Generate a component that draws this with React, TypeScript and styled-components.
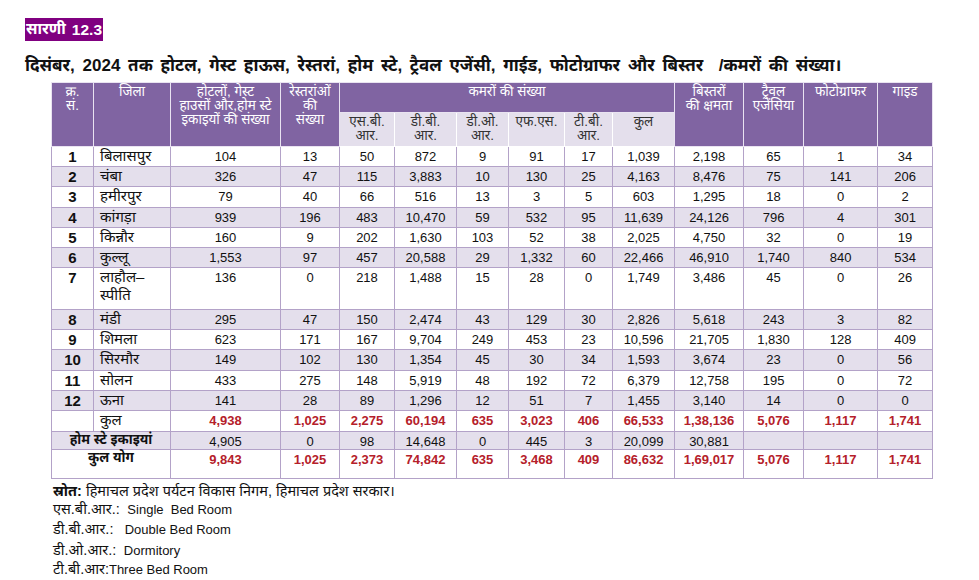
import React from "react";
import styled, { createGlobalStyle, css } from "styled-components";

const Global = createGlobalStyle`
  html, body { margin: 0; padding: 0; background: #ffffff; }
  body { font-family: "Liberation Sans", Arial, "Noto Sans Devanagari", "Lohit Devanagari", sans-serif; color: #111; }
`;

const FONT = `"Liberation Sans", Arial, "Noto Sans Devanagari", "Lohit Devanagari", sans-serif`;
const PURPLE = "#8064a2";
const LAV = "#e4dfec";
const LINE = "#b3a2c8";
const RED = "#b5202a";

const Page = styled.div`
  width: 979px;
  height: 580px;
  box-sizing: border-box;
  padding: 18px 0 0 25px;
  overflow: hidden;
`;

const TitleTag = styled.div`
  display: inline-flex;
  align-items: center;
  height: 23px;
  padding: 0 1px 0 1px;
  background: #800080;
  color: #fff;
  font-size: 15.5px;
  font-weight: bold;
  gap: 6px;
`;

const Heading = styled.h1`
  margin: 14px 0 0 0;
  font-size: 17px;
  font-weight: bold;
  line-height: 22px;
  word-spacing: 3px;
  color: #111;
  white-space: pre;
`;

const Table = styled.table`
  margin: 5px 0 0 26px;
  width: 881px;
  table-layout: fixed;
  border-collapse: collapse;
  font-family: ${FONT};
`;

const HeadCell = styled.th<{ $sub?: boolean; $h?: number }>`
  background: ${(p) => (p.$sub ? LAV : PURPLE)};
  color: ${(p) => (p.$sub ? "#333" : "#fff")};
  border: 1px solid ${(p) => (p.$sub ? "#ffffff" : "#e9e3f1")};
  font-weight: normal;
  font-size: 13.5px;
  line-height: 14px;
  vertical-align: top;
  text-align: center;
  padding: 2px 1px 0 1px;
  height: ${(p) => p.$h ?? 20}px;
  box-sizing: border-box;
`;

const Row = styled.tr<{ $shade?: boolean; $h?: number }>`
  background: ${(p) => (p.$shade ? LAV : "#fff")};
  height: ${(p) => p.$h ?? 20}px;
`;

const cellBase = css`
  border: 1px solid ${LINE};
  vertical-align: top;
  padding: 1px 2px 0 2px;
  box-sizing: border-box;
`;

const NumCell = styled.td<{ $red?: boolean }>`
  ${cellBase};
  text-align: center;
  font-size: 13px;
  line-height: 15px;
  padding-top: 2px;
  color: ${(p) => (p.$red ? RED : "#111")};
  font-weight: ${(p) => (p.$red ? "bold" : "normal")};
`;

const SerialCell = styled.td`
  ${cellBase};
  text-align: center;
  font-size: 15px;
  font-weight: bold;
  line-height: 17px;
`;

const DistrictCell = styled.td`
  ${cellBase};
  text-align: left;
  padding-left: 6px;
  font-size: 15px;
  line-height: 18px;
  padding-top: 0;
`;

const LabelCell = styled.td`
  ${cellBase};
  text-align: center;
  font-size: 13.5px;
  font-weight: bold;
  line-height: 15px;
  padding-top: 0;
`;

const Notes = styled.div`
  margin: 3px 0 0 28px;
  display: flex;
  flex-direction: column;
`;

const NoteLine = styled.div<{ $h?: number }>`
  font-size: 14.5px;
  line-height: ${(p) => p.$h ?? 20}px;
  white-space: pre;
  color: #111;
`;

const Strong = styled.b`
  font-weight: bold;
`;

const Eng = styled.span`
  font-family: "Liberation Sans", Arial, sans-serif;
  font-size: 13px;
`;

type R = { n: string; d: React.ReactNode; v: string[]; h?: number };

const rows: R[] = [
  { n: "1", d: "बिलासपुर", v: ["104", "13", "50", "872", "9", "91", "17", "1,039", "2,198", "65", "1", "34"] },
  { n: "2", d: "चंबा", v: ["326", "47", "115", "3,883", "10", "130", "25", "4,163", "8,476", "75", "141", "206"] },
  { n: "3", d: "हमीरपुर", h: 21, v: ["79", "40", "66", "516", "13", "3", "5", "603", "1,295", "18", "0", "2"] },
  { n: "4", d: "कांगड़ा", v: ["939", "196", "483", "10,470", "59", "532", "95", "11,639", "24,126", "796", "4", "301"] },
  { n: "5", d: "किन्नौर", v: ["160", "9", "202", "1,630", "103", "52", "38", "2,025", "4,750", "32", "0", "19"] },
  { n: "6", d: "कुल्लू", v: ["1,553", "97", "457", "20,588", "29", "1,332", "60", "22,466", "46,910", "1,740", "840", "534"] },
  { n: "7", d: (<>लाहौल–<br />स्पीति</>), h: 42, v: ["136", "0", "218", "1,488", "15", "28", "0", "1,749", "3,486", "45", "0", "26"] },
  { n: "8", d: "मंडी", v: ["295", "47", "150", "2,474", "43", "129", "30", "2,826", "5,618", "243", "3", "82"] },
  { n: "9", d: "शिमला", v: ["623", "171", "167", "9,704", "249", "453", "23", "10,596", "21,705", "1,830", "128", "409"] },
  { n: "10", d: "सिरमौर", h: 21, v: ["149", "102", "130", "1,354", "45", "30", "34", "1,593", "3,674", "23", "0", "56"] },
  { n: "11", d: "सोलन", v: ["433", "275", "148", "5,919", "48", "192", "72", "6,379", "12,758", "195", "0", "72"] },
  { n: "12", d: "ऊना", v: ["141", "28", "89", "1,296", "12", "51", "7", "1,455", "3,140", "14", "0", "0"] },
];

const total = ["4,938", "1,025", "2,275", "60,194", "635", "3,023", "406", "66,533", "1,38,136", "5,076", "1,117", "1,741"];
const homestay = ["4,905", "0", "98", "14,648", "0", "445", "3", "20,099", "30,881", "", "", ""];
const grand = ["9,843", "1,025", "2,373", "74,842", "635", "3,468", "409", "86,632", "1,69,017", "5,076", "1,117", "1,741"];

const widths = [42, 77, 110, 59, 55, 62, 52, 56, 48, 62, 69, 60, 74, 55];

export default function App() {
  return (
    <Page>
      <Global />
      <TitleTag>
        <span>सारणी</span>
        <span>12.3</span>
      </TitleTag>
      <Heading>
        {"दिसंबर, 2024 तक होटल, गेस्ट हाऊस, रेस्तरां, होम स्टे, ट्रैवल एजेंसी, गाईड, फोटोग्राफर और बिस्तर  /कमरों की संख्या।"}
      </Heading>
      <Table>
        <colgroup>
          {widths.map((w, i) => (
            <col key={i} style={{ width: w }} />
          ))}
        </colgroup>
        <thead>
          <tr>
            <HeadCell rowSpan={2} $h={30}>क्र.<br />सं.</HeadCell>
            <HeadCell rowSpan={2} $h={30}>जिला</HeadCell>
            <HeadCell rowSpan={2} $h={30}>होटलों, गेस्ट<br />हाउसों और,होम स्टे<br />इकाइयों की संख्या</HeadCell>
            <HeadCell rowSpan={2} $h={30}>रेस्तरांओं<br />की<br />संख्या</HeadCell>
            <HeadCell colSpan={6} $h={30}>कमरों की संख्या</HeadCell>
            <HeadCell rowSpan={2} $h={30}>बिस्तरों<br />की क्षमता</HeadCell>
            <HeadCell rowSpan={2} $h={30}>ट्रैवल<br />एजेंसिया</HeadCell>
            <HeadCell rowSpan={2} $h={30}>फोटोग्राफर</HeadCell>
            <HeadCell rowSpan={2} $h={30}>गाइड</HeadCell>
          </tr>
          <tr>
            <HeadCell $sub $h={34}>एस.बी.<br />आर.</HeadCell>
            <HeadCell $sub $h={34}>डी.बी.<br />आर.</HeadCell>
            <HeadCell $sub $h={34}>डी.ओ.<br />आर.</HeadCell>
            <HeadCell $sub $h={34}>एफ.एस.</HeadCell>
            <HeadCell $sub $h={34}>टी.बी.<br />आर.</HeadCell>
            <HeadCell $sub $h={34}>कुल</HeadCell>
          </tr>
        </thead>
        <tbody>
          {rows.map((r, i) => (
            <Row key={r.n} $shade={i % 2 === 1} $h={r.h ?? 20}>
              <SerialCell>{r.n}</SerialCell>
              <DistrictCell>{r.d}</DistrictCell>
              {r.v.map((v, j) => (
                <NumCell key={j}>{v}</NumCell>
              ))}
            </Row>
          ))}
          <Row $h={21}>
            <NumCell />
            <DistrictCell>कुल</DistrictCell>
            {total.map((v, j) => (
              <NumCell key={j} $red>{v}</NumCell>
            ))}
          </Row>
          <Row $shade $h={17}>
            <LabelCell colSpan={2}>होम स्टे इकाइयां</LabelCell>
            {homestay.map((v, j) => (
              <NumCell key={j}>{v}</NumCell>
            ))}
          </Row>
          <Row $h={29}>
            <LabelCell colSpan={2}>कुल योग</LabelCell>
            {grand.map((v, j) => (
              <NumCell key={j} $red>{v}</NumCell>
            ))}
          </Row>
        </tbody>
      </Table>
      <Notes>
        <NoteLine $h={18}>
          <Strong>स्रोत:</Strong> हिमाचल प्रदेश पर्यटन विकास निगम, हिमाचल प्रदेश सरकार।
        </NoteLine>
        <NoteLine $h={18}>एस.बी.आर.: <Eng> Single  Bed Room</Eng></NoteLine>
        <NoteLine $h={20}>डी.बी.आर.: <Eng>  Double Bed Room</Eng></NoteLine>
        <NoteLine $h={20}>डी.ओ.आर.: <Eng> Dormitory</Eng></NoteLine>
        <NoteLine $h={16}>टी.बी.आर:<Eng>Three Bed Room</Eng></NoteLine>
      </Notes>
    </Page>
  );
}
